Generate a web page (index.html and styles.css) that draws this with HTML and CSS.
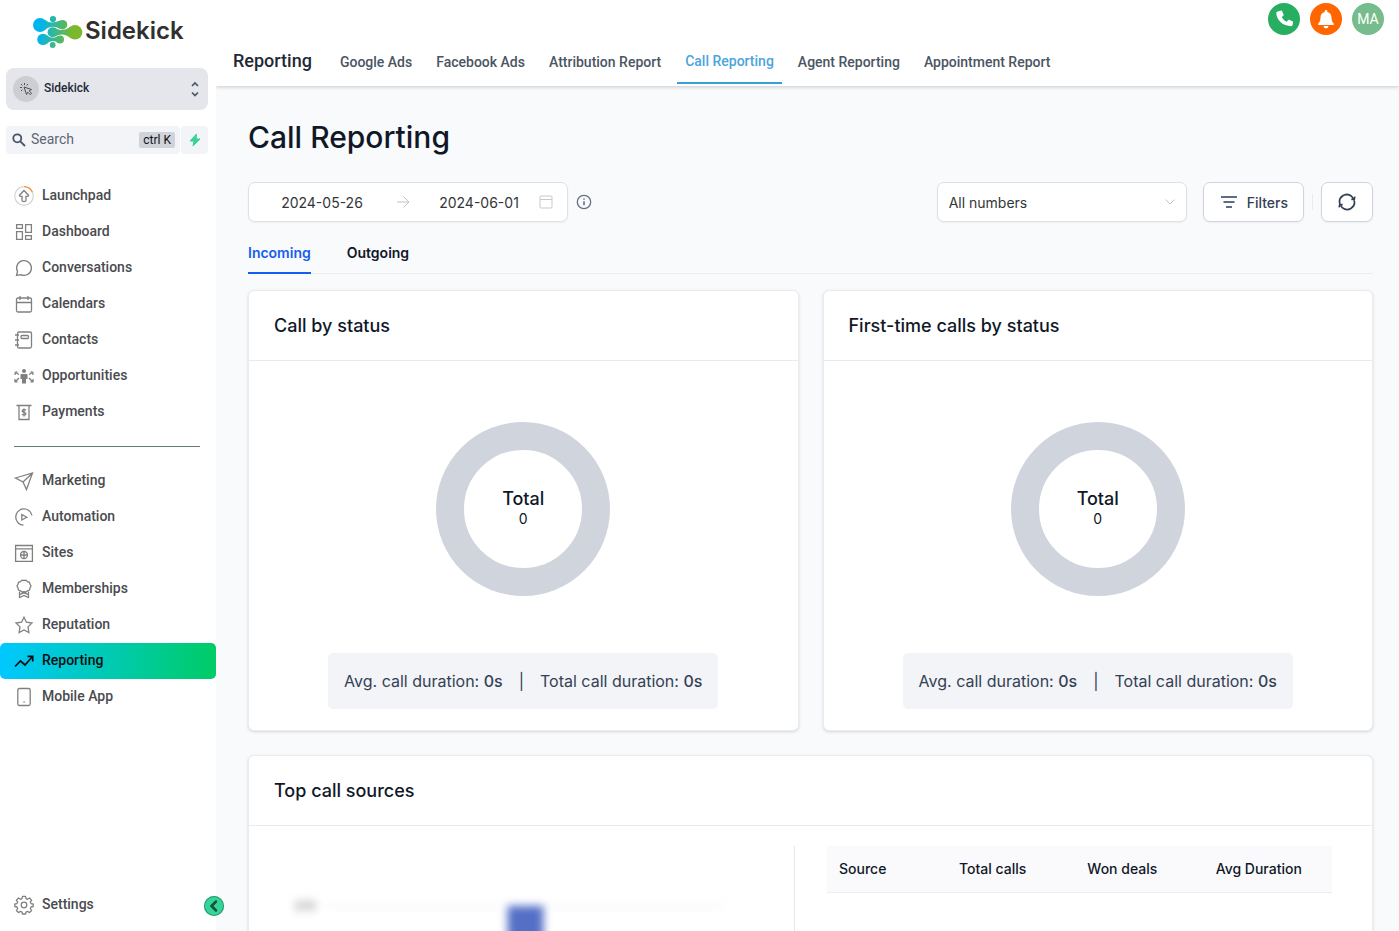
FILE: index.html
```html
<!DOCTYPE html>
<html lang="en">
<head>
<meta charset="utf-8">
<title>Call Reporting</title>
<link rel="stylesheet" href="styles.css">
</head>

<body>

<!-- SIDEBAR -->
<aside class="sidebar">
  <a class="logo" href="#">
    <svg width="50" height="32" viewBox="0 0 50 32">
      <defs>
        <linearGradient id="logoFill" gradientUnits="userSpaceOnUse" x1="10" y1="0" x2="42" y2="6">
          <stop offset="0" stop-color="#00b5ec"/>
          <stop offset=".5" stop-color="#3fb788"/>
          <stop offset="1" stop-color="#7cb928"/>
        </linearGradient>
      </defs>
      <g fill="url(#logoFill)">
        <circle cx="7" cy="9" r="7"/>
        <path d="M11.500 3.600Q17 9 27 4.500V12.900Q18 8 11.500 14.400z"/>
        <circle cx="29.500" cy="8.700" r="4.800"/>
        <circle cx="19.600" cy="16.200" r="5"/>
        <path d="M22 11.800Q29 17 38 10.200V22.400Q30 15.500 22 20.600z"/>
        <circle cx="42" cy="16.300" r="7.300"/>
        <circle cx="10" cy="23.400" r="5.700"/>
        <path d="M13.500 19Q19 24 25.500 19.700V27Q19 22.800 13.500 27.900z"/>
        <circle cx="27" cy="23.400" r="4"/>
        <circle cx="20" cy="3.100" r="3.100"/>
        <circle cx="19.700" cy="29" r="2.900"/>
      </g>
    </svg>
    <span>Sidekick</span>
  </a>

  <button class="account">
    <span class="account-icon">
      <svg width="14" height="14" viewBox="0 0 14 14" fill="none" stroke="#4b4f58" stroke-linejoin="round">
        <path d="M5 5l2.500 7.500 1.300-2.300 2.400 2.400 1.400-1.400-2.400-2.400 2.300-1.300zM5.500 1v2M2 2l1.400 1.400M1 5.500h2M9 2L7.700 3.400M2 9l1.400-1.300"/>
      </svg>
    </span>
    <span class="account-name">Sidekick</span>
    <svg width="10" height="16" viewBox="0 0 10 16" fill="none" stroke="#4b5563" stroke-width="1.700"><path d="M2 5l3-3 3 3M2 11.500l3 3 3-3"/></svg>
  </button>

  <div class="search-row">
    <label class="search">
      <svg width="14" height="14" viewBox="0 0 14 14" fill="none" stroke="#475467" stroke-width="1.800"><circle cx="5.300" cy="5.300" r="4"/><path d="M8.300 8.300l4.700 4.700"/></svg>
      <input type="text" placeholder="Search" aria-label="Search">
      <kbd>ctrl K</kbd>
    </label>
    <button class="bolt" aria-label="Quick actions">
      <svg width="12" height="14" viewBox="0 0 12 14"><path d="M7.500 1L1 8h4l-1 5 7-7H7z" fill="#37d399" stroke="#37d399" stroke-linejoin="round"/></svg>
    </button>
  </div>

  <nav class="menu">
    <a href="#"><svg viewBox="0 0 20 20"><circle cx="10" cy="10" r="9.300" stroke="#d5d7da"/><path d="M10 .7a9.300 9.300 0 0 1 8.500 5.600" stroke="#fb923c"/><path d="M10 4.500l4.500 4.700c.2.700-.3 1.100-1 1.100H12v4.200c0 1.400-4 1.400-4 0v-4.200H6.500c-.7 0-1.200-.4-1-1.100z"/></svg>Launchpad</a>
    <a href="#"><svg viewBox="0 0 20 20"><path d="M2.600 2.600h5.800v3.800H2.600zM11.600 2.600h5.800v7.800h-5.800zM2.600 9.600h5.800v7.800H2.600zM11.600 13.600h5.800v3.800h-5.800z"/></svg>Dashboard</a>
    <a href="#"><svg viewBox="0 0 20 20"><path d="M2.500 17.500l1-4A7.400 7.400 0 1 1 6.700 16.600z"/></svg>Conversations</a>
    <a href="#"><svg viewBox="0 0 20 20"><rect x="2.500" y="4" width="15" height="14" rx="1.500"/><path d="M2.500 8.500h15M6 2v4M14 2v4"/></svg>Calendars</a>
    <a href="#"><svg viewBox="0 0 20 20"><rect x="3.500" y="2" width="14" height="16" rx="1.500"/><rect x="7" y="5.500" width="7.500" height="3" rx="1"/><path d="M1 5h4M1 10h4M1 15h4"/></svg>Contacts</a>
    <a href="#"><svg viewBox="0 0 20 20"><g fill="#808080" stroke="none"><circle cx="10" cy="5" r="2"/><path d="M7.500 8h5c.6 0 1 .4 1 1v4h-1.500v4.500H8V13H6.500V9c0-.6.400-1 1-1z"/></g><path d="M5 8.500L1.500 6.500M1 9l.3-2.600L3.500 6M5 12l-3.500 3.500M1 13v2.800h2.500M15 8.500l3.500-2M16.500 6l2.300.4L19 9M15 12l3.500 3.500M19 13v2.800h-2.500"/></svg>Opportunities</a>
    <a href="#"><svg viewBox="0 0 20 20"><path d="M2.500 3.500h15M5 3.500v14h10v-14M12 8.200c-1-.8-3.800-.9-3.800.8 0 1.800 3.700.8 3.700 2.700 0 1.700-2.900 1.500-4 .6M10 6.500v8"/></svg>Payments</a>
    <hr>
    <a href="#"><svg viewBox="0 0 20 20"><path d="M1.500 7L18.500 2 12.500 18.500 9 11zM9 11l9.500-9"/></svg>Marketing</a>
    <a href="#"><svg viewBox="0 0 20 20"><path d="M18 8.500A8.200 8.200 0 1 0 9.500 18.200M7.800 7.500l5 2.700-5 2.800z"/></svg>Automation</a>
    <a href="#"><svg viewBox="0 0 20 20"><path d="M1.600 2.500h16.800v15.800H1.600zM1.600 5.800h16.800M6.500 12h7M10 8.500v7"/><circle cx="10" cy="12" r="3.500"/></svg>Sites</a>
    <a href="#"><svg viewBox="0 0 20 20"><path d="M10 1.500l2-.3 1.500 1.500 2 .6.500 2 1 1.700-1 1.900-.5 2.100-2 .7-1.500 1.300-2-.3-2 .3-1.500-1.300-2-.7L4 8.900 3 7l1-1.700.5-2 2-.6L8 1.200zM5.500 12.500v6l4.500-2 4.500 2v-6M6 15.300l4-1.500 4 1.500"/></svg>Memberships</a>
    <a href="#"><svg viewBox="0 0 20 20"><path d="M10 2.200l2.400 5 5.600.8-4 3.900.9 5.600-4.900-2.600-4.900 2.600.9-5.600-4-3.900 5.600-.8z"/></svg>Reputation</a>
    <a href="#" class="active"><svg viewBox="0 0 20 20"><path d="M1 15.500L6.500 10l4.500 4 7.500-8.500M13.500 5.300h5.200v5.200"/></svg>Reporting</a>
    <a href="#"><svg viewBox="0 0 20 20"><rect x="3.800" y="1.500" width="12.400" height="17" rx="1.500"/><path d="M9.500 15h1.200"/></svg>Mobile App</a>
  </nav>

  <div class="menu settings">
    <a href="#"><svg viewBox="0 0 20 20"><circle cx="10" cy="10" r="2.800"/><path stroke-linejoin="round" d="M8.500 1.300h3l.5 2.300 1.500.7 2-1.300 2.100 2.100-1.300 2 .7 1.500 2.200.4v2.500l-2.200.5-.7 1.500 1.300 2-2.100 2.100-2-1.300-1.500.7-.5 2h-3l-.5-2-1.500-.7-2 1.300-2.100-2.100 1.300-2-.7-1.500-2.200-.5V9l2.200-.4.7-1.500-1.300-2L4.500 3l2 1.300L8 3.600z"/></svg>Settings</a>
  </div>
  <button class="collapse" aria-label="Collapse menu">
    <svg width="20" height="20" viewBox="0 0 20 20" fill="none" stroke="#14523f" stroke-width="2.500"><path d="M12 5.500L7.500 10l4.500 4.500" stroke-linecap="round"/></svg>
  </button>
</aside>

<div class="main">

  <!-- TOP BAR -->
  <header class="topbar">
    <div class="quick">
      <button class="round green" aria-label="Phone">
        <svg width="18" height="18" viewBox="0 0 16 16" fill="#fff"><path d="M3.800.9l1.500-.4c.5-.1.900.1 1.100.6l1.200 2.800c.2.400.1.800-.2 1.100L6 6.200c1 2 2.500 3.400 4.400 4.300l1.200-1.500c.3-.4.700-.5 1.100-.3l2.700 1.200c.5.200.7.600.6 1.100l-.5 2.600c-.1.500-.5.800-1 .8C7 14.400 1.400 9.200 1.100 2.500c0-.5.200-.9.700-1z"/></svg>
      </button>
      <button class="round orange" aria-label="Notifications">
        <svg width="18" height="20" viewBox="0 0 18 20" fill="#fff"><path d="M9 1c.8 0 1.300.6 1.300 1.300v.6c2.500.6 4.200 2.600 4.200 5.300 0 3.400.8 4.800 2 6 .8.900.3 1.800-.7 1.800H2.200c-1 0-1.500-.9-.7-1.800 1.200-1.200 2-2.600 2-6 0-2.700 1.700-4.700 4.200-5.300v-.6C7.700 1.600 8.200 1 9 1zM6.500 17h5a2.500 2.500 0 0 1-5 0z"/></svg>
      </button>
      <button class="round avatar">MA</button>
    </div>
    <div class="topnav">
      <h2>Reporting</h2>
      <nav>
        <a href="#">Google Ads</a>
        <a href="#">Facebook Ads</a>
        <a href="#">Attribution Report</a>
        <a href="#" class="active">Call Reporting</a>
        <a href="#">Agent Reporting</a>
        <a href="#">Appointment Report</a>
      </nav>
    </div>
  </header>

  <main class="content">
    <h1>Call Reporting</h1>

    <!-- FILTER BAR -->
    <div class="toolbar">
      <div class="dates">
        <input type="text" value="2024-05-26" aria-label="Start date">
        <svg class="arrow" width="14" height="14" viewBox="0 0 14 14" fill="none" stroke="#c2c2c6"><path d="M1 7h12M7.500 1.500L13 7l-5.500 5.500"/></svg>
        <input type="text" value="2024-06-01" aria-label="End date">
        <svg width="14" height="14" viewBox="0 0 14 14" fill="none" stroke="#c9c9cd"><rect x="1" y="1" width="12" height="12" rx="1"/><path d="M1 4.500h12"/></svg>
      </div>
      <svg class="info" width="16" height="16" viewBox="0 0 16 16" fill="none" stroke="#667085"><circle cx="8" cy="8" r="6.700" stroke-width="1.300"/><path d="M8 7.300v4M8 4.500v1.300" stroke-width="1.600"/></svg>

      <div class="select">
        <select aria-label="Numbers"><option>All numbers</option></select>
        <svg width="12" height="8" viewBox="0 0 12 8" fill="none" stroke="#c2c2c6"><path d="M1.500 1.500L6 6l4.500-4.500"/></svg>
      </div>
      <button class="btn filters">
        <svg width="18" height="14" viewBox="0 0 18 14" fill="none" stroke="#5f6c85" stroke-width="1.800"><path d="M1 2h16M3.500 7h11M6 12h6"/></svg>
        Filters
      </button>
      <span class="sep"></span>
      <button class="btn refresh" aria-label="Refresh">
        <svg width="18" height="18" viewBox="0 0 18 18" fill="none" stroke="#344054" stroke-width="1.700"><path d="M2 11A7.200 7.200 0 0 1 13.500 3.200M16 7A7.200 7.200 0 0 1 4.500 14.800M6.500 1.900A7.200 7.200 0 0 1 15.500 6M11.500 16.100A7.200 7.200 0 0 1 2.500 12M13.300 6.300l3-.2.500-2.500M4.700 11.700l-3 .2-.5 2.500"/></svg>
      </button>
    </div>

    <div class="tabs">
      <button class="active">Incoming</button>
      <button>Outgoing</button>
    </div>

    <!-- STATUS CARDS -->
    <div class="cards">
      <section class="card">
        <h3>Call by status</h3>
        <div class="card-body">
          <div class="donut"><strong>Total</strong><span>0</span></div>
          <div class="stats">
            <span>Avg. call duration: <b>0s</b></span>
            <span>|</span>
            <span>Total call duration: <b>0s</b></span>
          </div>
        </div>
      </section>
      <section class="card">
        <h3>First-time calls by status</h3>
        <div class="card-body">
          <div class="donut"><strong>Total</strong><span>0</span></div>
          <div class="stats">
            <span>Avg. call duration: <b>0s</b></span>
            <span>|</span>
            <span>Total call duration: <b>0s</b></span>
          </div>
        </div>
      </section>
    </div>

    <!-- TOP SOURCES -->
    <section class="card">
      <h3>Top call sources</h3>
      <div class="sources">
        <div class="chart">
          <svg viewBox="0 0 500 240">
            <path d="M54 40h400M54 90h400M54 140h400" stroke="#e0e6f1"/>
            <text x="22" y="44">200</text>
            <rect x="236" y="40" width="36" height="200" fill="#5470c6"/>
          </svg>
        </div>
        <div class="source-table">
          <table>
            <thead>
              <tr><th>Source</th><th>Total calls</th><th>Won deals</th><th>Avg Duration</th></tr>
            </thead>
          </table>
        </div>
      </div>
    </section>
  </main>
</div>

</body>
</html>
```
FILE: styles.css
```css
* {box-sizing:border-box;}
body {
  margin:0; display:flex; height:100vh; overflow:hidden;
  font-family:Inter, "Liberation Sans", sans-serif; background:#f9fafb; color:#101828;
}
h1, h2, h3 {margin:0; font-weight:500;}
a {text-decoration:none; color:inherit;}
button {font-family:inherit; cursor:pointer; border:none; padding:0;}
svg {flex:none; display:block;}
input, select {font-family:inherit; border:none; outline:none; background:none;}

/* sidebar */
.sidebar {
  width:216px; flex:none; background:#fff; position:relative; z-index:2;
  display:flex; flex-direction:column; font-family:Roboto, sans-serif;
}
.logo {
  display:flex; align-items:center; gap:2px; height:32px;
  margin:16px 0 20px 33px;
  font:600 24px/32px Inter, sans-serif; color:#303030;
}
.logo span {padding-bottom:2px;}
.account {
  display:flex; align-items:center; height:42px; margin:0 8px 16px 6px;
  padding:0 8px 0 7px; border-radius:8px; background:#e5e6eb;
}
.account-icon {
  width:26px; height:26px; border-radius:50%; background:#cdced2;
  display:flex; align-items:center; justify-content:center;
}
.account-name {
  flex:1; padding:0 0 2px 5px; text-align:left;
  font-size:12px; font-weight:500; color:#1f2937;
}
.search-row {display:flex; gap:1px; height:28px; margin:0 8px 24px 6px;}
.search {
  flex:1; min-width:0; display:flex; align-items:center; padding:0 5px 0 6px;
  background:#f3f4f7; border-radius:4px;
}
.search input {flex:1; min-width:0; padding:0 5px 2px; font-size:14px;}
.search input::placeholder {color:#5d6675; opacity:1;}
.search kbd {
  font:12px/16px Roboto, sans-serif; padding:0 4px;
  background:#d0d3da; border-radius:2px; color:#111;
}
.bolt {
  width:27px; background:#f3f4f7; border-radius:4px;
  display:flex; align-items:center; justify-content:center;
}

.menu a {
  display:flex; align-items:center; gap:8px; height:36px; padding:0 14px 2px;
  font-size:14px; font-weight:500; color:#4a4b4f;
}
.menu svg {width:20px; height:20px; margin-top:2px; fill:none; stroke:#808080; stroke-width:1.3;}
.menu a.active {
  background:linear-gradient(90deg,#00c8ff,#00cc66);
  color:#0b0f12; border-radius:5px;
}
.menu a.active svg {stroke:#0b0f12; stroke-width:1.7;}
.menu hr {border:none; border-top:1px solid #667a7a; margin:16px 16px 16px 14px;}
.settings {margin-top:auto; margin-bottom:8px;}
.collapse {
  position:absolute; right:-8px; bottom:15px; width:20px; height:20px;
  border-radius:50%; background:#37d399; box-shadow:inset 0 0 0 1px #2a9a74;
}

/* top bar */
.main {flex:1; min-width:0; display:flex; flex-direction:column;}
.topbar {
  background:#fff; flex:none; position:relative; z-index:1;
  font-family:Roboto, sans-serif; box-shadow:0 1px 4px rgba(0,0,0,.2);
}
.quick {display:flex; justify-content:flex-end; gap:10px; padding:3px 15px 0;}
.round {
  width:32px; height:32px; border-radius:50%; color:#fff; font-size:14px;
  display:flex; align-items:center; justify-content:center;
}
.green {background:#27ae60;}
.orange {background:#ff6600;}
.avatar {background:#77bc8c;}
.topnav {display:flex; align-items:center; gap:20px; height:51px; padding-left:17px;}
.topnav h2 {font-size:18px; color:#1f2937;}
.topnav nav {display:flex; gap:8px; align-self:flex-end; margin-bottom:2px;}
.topnav nav a {
  padding:0 8px; height:44px; line-height:44px;
  font-size:14px; font-weight:500; color:#4b5563;
}
.topnav nav a.active {border-bottom:2px solid #389fdb; line-height:42px; color:#4aa5dc;}

/* content */
.content {padding:32px 26px 0 32px; overflow:hidden; flex:1;}
h1 {font-size:30px; line-height:38px; margin-bottom:26px; font-weight:500;}
.toolbar {display:flex; align-items:center; height:40px;}
.dates, .select, .btn {
  height:40px; background:#fff; border:1px solid #dfe1e6; border-radius:7px;
  box-shadow:0 1px 2px rgba(16,24,40,.05);
}
.dates {width:320px; display:flex; align-items:center; padding:0 14px 0 13px;}
.dates input {flex:1; min-width:0; padding:0; text-align:center; font-size:14px; color:#333639;}
.arrow {margin:0 9px 0 14px;}
.info {margin-left:8px;}
.select {width:250px; margin-left:auto; display:grid; align-items:center;}
.select select, .select svg {grid-area:1/1;}
.select select {appearance:none; height:38px; padding:0 11px; font-size:14px; color:#333639;}
.select svg {justify-self:end; margin-right:10px; pointer-events:none;}
.btn {
  display:flex; align-items:center; justify-content:center; border-color:#d0d5dd;
  font-size:14px; font-weight:500; color:#344054;
}
.filters {gap:9px; padding:0 15px 0 16px; margin-left:16px;}
.sep {width:1px; height:16px; margin:0 8px; background:#e8eaee;}
.refresh {width:52px;}

.tabs {display:flex; gap:36px; margin:14px 0 16px; box-shadow:inset 0 -1px #ebedf0;}
.tabs button {
  height:38px; padding-bottom:4px; background:none; border-bottom:2px solid transparent;
  font-size:14px; font-weight:600; color:#101828;
}
.tabs button.active {color:#155eef; border-color:#155eef;}

.cards {display:grid; grid-template-columns:1fr 1fr; gap:24px; margin-bottom:24px;}
.card {
  background:#fff; border:1px solid #eaecf0; border-radius:6px;
  box-shadow:0 1px 3px rgba(16,24,40,.16);
}
.card h3 {
  font-size:18px; line-height:28px; padding:21px 25px 20px;
  border-bottom:1px solid #e8eaed;
}
.card-body {display:flex; flex-direction:column; align-items:center; padding:61px 0 21px;}
.donut {
  width:174px; height:174px; border:28px solid #d0d4dd; border-radius:50%;
  display:flex; flex-direction:column; align-items:center; justify-content:center;
  padding-bottom:2px;
}
.donut strong {font-size:18px; line-height:22px; font-weight:500;}
.donut span {font-size:14px; line-height:18px;}
.stats {
  display:flex; gap:16px; margin-top:57px; padding:16px; line-height:24px;
  background:#f2f4f7; border-radius:5px; font-size:16px; color:#344054;
}
.stats b {font-weight:500;}

.sources {display:flex; padding-top:20px;}
.chart {width:546px; height:260px; border-right:1px solid #e5e7eb; padding:20px 23px;}
.chart svg {width:100%; filter:blur(4px);}
.chart text {font-size:12px; fill:#6e7079;}
.source-table {flex:1; padding:0 40px 0 32px;}
table {width:100%; border-collapse:collapse; table-layout:fixed;}
th {
  height:46px; padding:0 12px; background:#fafafc; border-bottom:1px solid #ebedf0;
  text-align:left; font-size:14px; font-weight:500;
}
th:first-child {width:120px;}
```
